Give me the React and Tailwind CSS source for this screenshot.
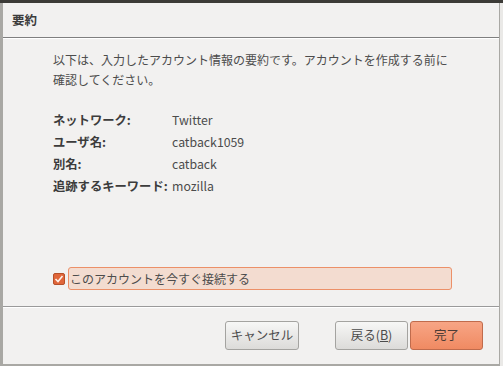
import React from "react";

export default function App() {
  const font = { fontFamily: '"Noto Sans CJK JP", "Noto Sans", sans-serif' };
  return (
    <div
      className="w-[503px] h-[366px] bg-[#3c3b37] pt-[3px] overflow-hidden text-[12.3px] text-[#3c3c3c]"
      style={font}
    >
      <div className="h-[363px] flex bg-[#a9a8a4]">
        <div className="w-[3px]" />
        <div className="flex-1 flex flex-col bg-[#f2f1f0] mb-[2px]">
          <div className="h-[35px] flex items-center pl-[9px] font-bold text-[12.5px] text-[#3c3c3c] border-b border-[#7f7f7f]">
            要約
          </div>
          <div className="h-px bg-white" />
          <div className="flex-1 flex flex-col pl-[50px] pr-[40px]">
            <p className="mt-[11px] leading-[20px] text-[12px] text-[#4c4c4c] whitespace-nowrap">
              以下は、入力したアカウント情報の要約です。アカウントを作成する前に
              <br />
              確認してください。
            </p>
            <div className="mt-[20px] grid grid-cols-[119px_1fr] gap-y-[2px] leading-[20px]">
              <div className="font-bold text-[#3c3c3c]">ネットワーク:</div>
              <div className="text-[#4c4c4c]">Twitter</div>
              <div className="font-bold text-[#3c3c3c]">ユーザ名:</div>
              <div className="text-[#4c4c4c]">catback1059</div>
              <div className="font-bold text-[#3c3c3c]">別名:</div>
              <div className="text-[#4c4c4c]">catback</div>
              <div className="font-bold text-[#3c3c3c] whitespace-nowrap">追跡するキーワード:</div>
              <div className="text-[#4c4c4c]">mozilla</div>
            </div>
            <div className="mt-[71px] flex items-center gap-[3px]">
              <div className="w-[12px] h-[12px] rounded-[2px] bg-[#e0663a] border border-[#b5502a] flex items-center justify-center">
                <svg width="10" height="10" viewBox="0 0 10 10">
                  <path d="M1.5 5 L4 7.5 L8.5 2" fill="none" stroke="#fff2ea" strokeWidth="1.6" />
                </svg>
              </div>
              <div className="w-[384px] h-[23px] rounded-[3px] border border-[#ec9068] bg-[#f3dcd0] flex items-center pl-[1px] text-[12px] text-[#4c4c4c] leading-none">
                このアカウントを今すぐ接続する
              </div>
            </div>
          </div>
          <div className="h-px bg-[#9a9a9a]" />
          <div className="h-px bg-white" />
          <div className="h-[56px] flex items-start pt-[13px] pl-[222px]">
            <button className="w-[74px] h-[29px] rounded-[3px] border border-[#a4a3a0] bg-gradient-to-b from-[#f7f7f6] to-[#dcdbd9] text-[#4c4c4c] text-[12.5px]">
              キャンセル
            </button>
            <button className="ml-[36px] w-[73px] h-[29px] rounded-[3px] border border-[#a4a3a0] bg-gradient-to-b from-[#f7f7f6] to-[#dcdbd9] text-[#4c4c4c] text-[12.5px]">
              戻る(<span className="underline">B</span>)
            </button>
            <button className="ml-[2px] w-[73px] h-[29px] rounded-[3px] border border-[#c06b4c] bg-gradient-to-b from-[#f7a585] to-[#f08a62] text-[#4c3c36] text-[12.5px]">
              完了
            </button>
          </div>
        </div>
        <div className="w-[1px] bg-[#a9a8a4]" />
        <div className="w-[3px] bg-[#eae9e7]" />
      </div>
    </div>
  );
}
